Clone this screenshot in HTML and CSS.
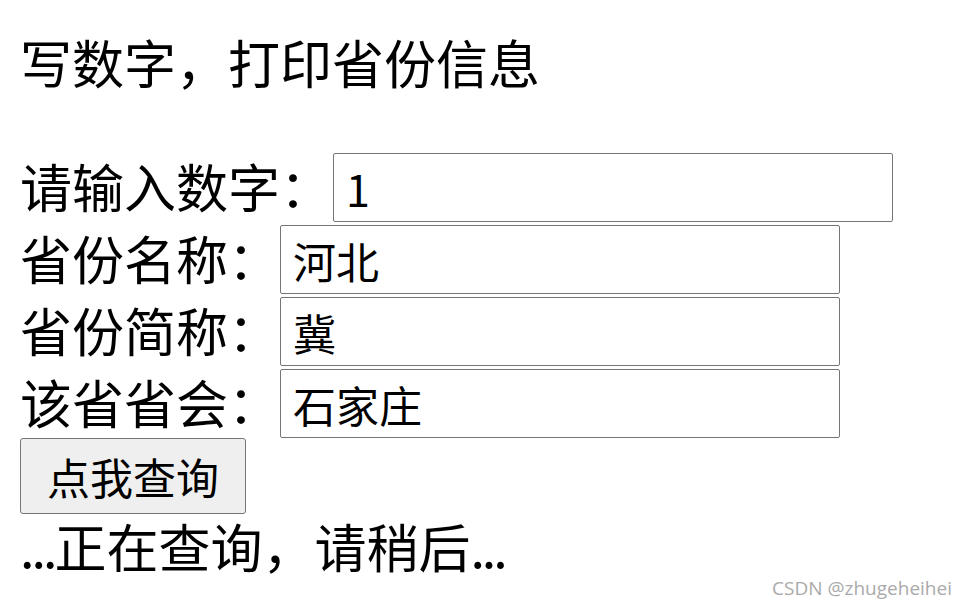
FILE: index.html
```html
<!DOCTYPE html>
<html lang="zh-CN">
<head>
    <meta charset="UTF-8">
    <meta name="viewport" content="width=device-width, initial-scale=1.0">
    <title>省份查询</title>
    <link rel="stylesheet" href="styles.css">
</head>
<body>
    <div class="page">
        <div class="title">写数字，打印省份信息</div>

        <div class="row">
            <label for="num">请输入数字：</label><input id="num" class="field field-first" type="text" value="1">
        </div>
        <div class="row">
            <label for="name">省份名称：</label><input id="name" class="field" type="text" value="河北">
        </div>
        <div class="row">
            <label for="short">省份简称：</label><input id="short" class="field" type="text" value="冀">
        </div>
        <div class="row">
            <label for="capital">该省省会：</label><input id="capital" class="field" type="text" value="石家庄">
        </div>

        <button class="query-btn">点我查询</button>
        <div class="status"><span class="dots">...</span>正在查询，请稍后<span class="dots">...</span></div>
    </div>

    <div class="watermark">CSDN @zhugeheihei</div>
</body>
</html>
```

FILE: styles.css
```css
body {
    margin: 0;
    font-family: "Microsoft YaHei", "Noto Sans CJK SC", sans-serif;
    background-color: #fff;
    color: #000;
}
.page {
    padding: 26px 20px 0;
    font-size: 52px;
}
.title {
    line-height: 72px;
    margin-bottom: 52px;
}
.row {
    display: flex;
    align-items: flex-start;
    height: 72px;
}
.row label {
    line-height: 72px;
    white-space: nowrap;
}
.field {
    box-sizing: border-box;
    width: 560px;
    height: 69px;
    margin-top: 3px;
    padding: 0 12px;
    border: 1px solid #767676;
    border-radius: 2px;
    font-family: inherit;
    font-size: 43px;
    color: #000;
    background: #fff;
}
.field-first {
    margin-left: 1px;
}
.query-btn {
    display: block;
    box-sizing: border-box;
    width: 226px;
    height: 76px;
    padding: 0;
    border: 1px solid #767676;
    border-radius: 3px;
    background-color: #efefef;
    font-family: inherit;
    font-size: 43px;
    color: #000;
    cursor: pointer;
}
.status {
    line-height: 64px;
}
.dots {
    letter-spacing: -3px;
}
.watermark {
    position: absolute;
    right: 14px;
    bottom: 8px;
    font-family: "Open Sans", "Liberation Sans", sans-serif;
    font-size: 19px;
    color: #aaa;
}
```
